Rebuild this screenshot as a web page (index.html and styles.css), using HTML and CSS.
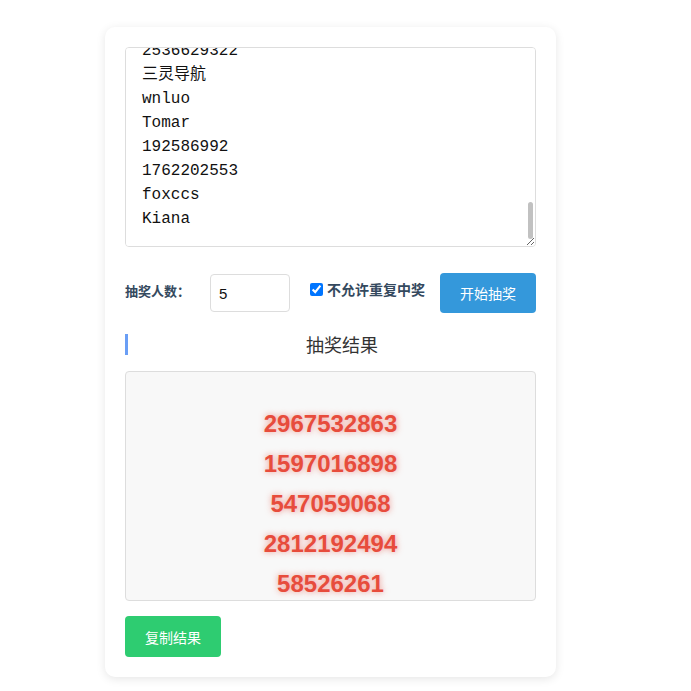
FILE: index.html
```html
<!DOCTYPE html>
<html lang="zh-CN">
<head>
    <meta charset="UTF-8">
    <meta name="viewport" content="width=device-width, initial-scale=1.0">
    <title>抽奖</title>
    <link rel="stylesheet" href="styles.css">
</head>
<body>
    <div class="lottery-card">
        <!-- 参与名单 -->
        <div class="list-wrap">
            <textarea class="name-list" id="name-list">Alice
小明
8848123
Lucky
2536629322
三灵导航
wnluo
Tomar
192586992
1762202553
foxccs
Kiana</textarea>
            <span class="list-thumb"></span>
        </div>

        <!-- 设置 -->
        <div class="controls">
            <label class="count-label" for="count">抽奖人数：</label>
            <input type="number" id="count" class="count-input" value="5">
            <label class="no-repeat">
                <input type="checkbox" checked>
                不允许重复中奖
            </label>
            <button class="btn-start">开始抽奖</button>
        </div>

        <!-- 结果 -->
        <h3 class="result-title">抽奖结果</h3>
        <div class="result-box">
            <div class="winner">2967532863</div>
            <div class="winner">1597016898</div>
            <div class="winner">547059068</div>
            <div class="winner">2812192494</div>
            <div class="winner">58526261</div>
        </div>

        <button class="btn-copy">复制结果</button>
    </div>

    <script>
        // 名单滚动到底部
        const list = document.getElementById('name-list');
        list.scrollTop = list.scrollHeight;
    </script>
</body>
</html>
```

FILE: styles.css
```css
/* Page style */
body {
    margin: 0;
    padding: 27px 0 20px 105px;
    background: #ffffff;
    font-family: "Noto Sans CJK SC", "Liberation Sans", sans-serif;
    color: #333;
}

/* Card */
.lottery-card {
    width: 411px;
    padding: 20px;
    background: #ffffff;
    border-radius: 10px;
    box-shadow: 0 2px 10px rgba(0, 0, 0, 0.1);
}

/* Name list */
.list-wrap {
    position: relative;
}

.name-list {
    display: block;
    box-sizing: border-box;
    width: 100%;
    height: 200px;
    margin: 0;
    padding: 15px 16px;
    border: 1px solid #ddd;
    border-radius: 4px;
    font-family: "Liberation Mono", "Noto Sans CJK SC", monospace;
    font-size: 16px;
    line-height: 24px;
    color: #111;
    resize: vertical;
}

/* scrollbar thumb (at bottom) */
.list-thumb {
    position: absolute;
    right: 3px;
    top: 155px;
    width: 5px;
    height: 37px;
    background: #c1c1c1;
    border-radius: 3px;
}

/* Settings row */
.controls {
    display: flex;
    align-items: center;
    margin-top: 26px;
}

.count-label {
    font-size: 13px;
    font-weight: bold;
    color: #34495e;
    margin-right: 20px;
    margin-top: -6px;
}

.count-input {
    box-sizing: border-box;
    width: 80px;
    height: 38px;
    padding: 0 8px;
    border: 1px solid #ddd;
    border-radius: 4px;
    font-family: "Liberation Sans", sans-serif;
    font-size: 15px;
    color: #111;
    margin-right: 16px;
}

.no-repeat {
    display: flex;
    align-items: center;
    font-size: 14px;
    font-weight: bold;
    color: #34495e;
    margin-top: -8px;
}

.no-repeat input {
    width: 13px;
    height: 13px;
    margin: 0 4px 0 4px;
}

.btn-start {
    margin-left: auto;
    width: 96px;
    height: 40px;
    border: none;
    border-radius: 4px;
    background-color: #3498db;
    color: white;
    font-family: "Noto Sans CJK SC", sans-serif;
    font-size: 14px;
    cursor: pointer;
}

/* Result title */
.result-title {
    margin: 21px 0 16px;
    padding-left: 20px;
    border-left: 3px solid #6a9ef5;
    text-align: center;
    font-size: 18px;
    font-weight: normal;
    line-height: 21px;
    color: #333;
}

/* Result box */
.result-box {
    box-sizing: border-box;
    height: 230px;
    padding-top: 32px;
    overflow: hidden;
    background: #f8f8f8;
    border: 1px solid #ddd;
    border-radius: 4px;
    text-align: center;
}

.winner {
    font-family: "Liberation Sans", Arial, sans-serif;
    font-size: 24px;
    font-weight: bold;
    line-height: 40px;
    color: #e74c3c;
    text-shadow: 0 0 6px rgba(231, 76, 60, 0.6);
}

/* Copy button */
.btn-copy {
    display: block;
    margin-top: 15px;
    width: 96px;
    height: 41px;
    border: none;
    border-radius: 4px;
    background-color: #2ecc71;
    color: white;
    font-family: "Noto Sans CJK SC", sans-serif;
    font-size: 14px;
    cursor: pointer;
}
```
